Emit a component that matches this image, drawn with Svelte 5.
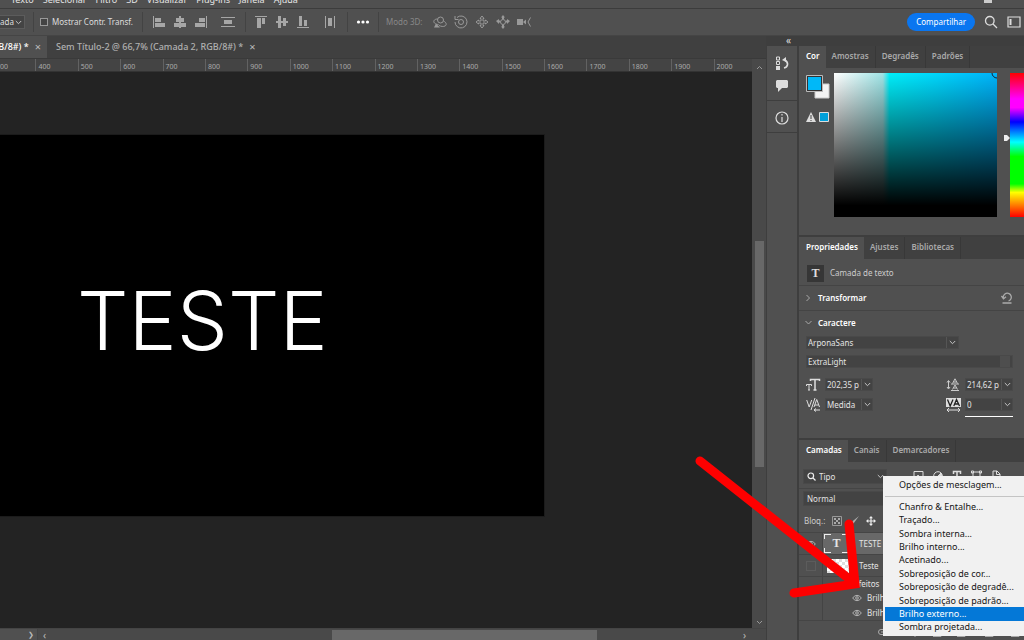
<script>
  const menus = ['Texto', 'Selecionar', 'Filtro', '3D', 'Visualizar', 'Plug-ins', 'Janela', 'Ajuda'];
  const marks = Array.from({ length: 18 }, (_, i) => (i + 3) * 100);
  const effects = [
    'Chanfro & Entalhe...', 'Traçado...', 'Sombra interna...', 'Brilho interno...', 'Acetinado...',
    'Sobreposição de cor...', 'Sobreposição de degradê...', 'Sobreposição de padrão...',
    'Brilho externo...', 'Sombra projetada...'
  ];
  const active = 'Brilho externo...';
  const alignH = [
    ['Alinhar à esquerda', 'M1 1h1v12H1zM3 3h6v4H3zM3 8h10v4H3z'],
    ['Centralizar na horizontal', 'M6 1h2v12H6zM3 3h8v4H3zM1 8h12v4H1z'],
    ['Alinhar à direita', 'M12 1h1v12h-1zM5 3h6v4H5zM1 8h10v4H1z']
  ];
  const alignV = [
    ['Alinhar ao topo', 'M1 1h12v1H1zM3 3h4v10H3zM8 3h3v6H8z'],
    ['Centralizar na vertical', 'M1 6h12v2H1zM3 1h3v12H3zM8 3h3v8H8z'],
    ['Alinhar à base', 'M1 12h12v1H1zM3 1h3v10H3zM8 5h3v6H8z']
  ];
</script>

{#snippet chevron()}
  <svg class="chev" width="7" height="5" viewBox="0 0 7 5"><path d="M.8 1l2.7 2.7L6.200 1" fill="none" stroke="#c4c4c4" /></svg>
{/snippet}

{#snippet eye()}
  <svg width="10" height="8" viewBox="0 0 10 8" fill="none" stroke="#b4b4b4"><path d="M.6 4Q5-1.400 9.400 4Q5 9.400.6 4z" /><circle cx="5" cy="4" r="1.300" /></svg>
{/snippet}

<div class="app">
  <nav class="menubar">
    {#each menus as m}<a href="#menu">{m}</a>{/each}
    <span class="winbtn"></span>
  </nav>

  <header class="options">
    <label class="mini"><select aria-label="Seleção"><option>ada</option></select>{@render chevron()}</label>
    <i class="sep"></i>
    <label class="check"><input type="checkbox" />Mostrar Contr. Transf.</label>
    <i class="sep wide"></i>
    <div class="tools">
      {#each alignH as [name, d]}<button aria-label={name}><svg width="14" height="14" viewBox="0 0 14 14"><path {d} /></svg></button>{/each}
      <button class="far" aria-label="Distribuir na vertical"><svg width="14" height="14" viewBox="0 0 14 14"><path d="M0 2h14v1H0zM3 5h8v4H3zM0 11h14v1H0z" /></svg></button>
    </div>
    <i class="sep"></i>
    <div class="tools">
      {#each alignV as [name, d]}<button aria-label={name}><svg width="14" height="14" viewBox="0 0 14 14"><path {d} /></svg></button>{/each}
      <button class="far" aria-label="Distribuir na horizontal"><svg width="14" height="14" viewBox="0 0 14 14"><path d="M2 1h1v12H2zM5 3h4v8H5zM11 1h1v12h-1z" /></svg></button>
    </div>
    <i class="sep"></i>
    <button class="dots" aria-label="Mais opções"><svg width="14" height="4" viewBox="0 0 14 4" fill="#fff"><circle cx="2.500" cy="2" r="1.600" /><circle cx="7" cy="2" r="1.600" /><circle cx="11.500" cy="2" r="1.600" /></svg></button>
    <i class="sep"></i>
    <span class="mode">Modo 3D:</span>
    <div class="tools line">
      <button aria-label="Orbitar"><svg width="14" height="14" viewBox="0 0 14 14"><circle cx="7.500" cy="5" r="3" /><path d="M4.500 4C1 4 0 6.500 1.500 8c1 1 2.500 1.500 4 1.500M10.500 6c3 1.500 3.500 4 1.500 5-1.500.8-4 .5-6-.5" /><path class="f" d="M1 12.500h6L3 8.500z" /></svg></button>
      <button aria-label="Girar"><svg width="14" height="14" viewBox="0 0 14 14"><circle cx="7" cy="7" r="2.500" /><path d="M3 2.500A6 6 0 1 1 1 7M1 1v3.500h3.500" /></svg></button>
      <button aria-label="Deslocar"><svg width="14" height="14" viewBox="0 0 14 14"><path d="M7 1l2 2.500H8v2.500h2.500V5L13 7l-2.500 2V8H8v2.500h1L7 13l-2-2.500h1V8H3.500v1L1 7l2.500-2v1H6V3.500H5z" /></svg></button>
      <button aria-label="Deslizar"><svg width="14" height="14" viewBox="0 0 14 14"><circle cx="7" cy="7" r="2.500" /><path class="f" d="M7 0l2 2.500H8V4H6V2.500H5zM0 6l3-2v1.500h1v2H3V9zM14 6l-3-2v1.500h-1v2h1V9zM7 14l2-2.500H8V10H6v1.500H5z" /></svg></button>
      <button aria-label="Câmera"><svg width="14" height="14" viewBox="0 0 14 14"><path class="f" d="M0 4h6v6H0zM6 7l3-2.500v5z" /><path d="M13.500 2.500L11 7l2.500 4.500" /></svg></button>
    </div>
    <div class="right">
      <button class="share">Compartilhar</button>
      <button aria-label="Pesquisar"><svg width="14" height="14" viewBox="0 0 14 14" fill="none" stroke="#ddd" stroke-width="1.300"><circle cx="5.800" cy="5.800" r="4.300" /><path d="M9 9l4 4" /></svg></button>
      <button aria-label="Área de trabalho"><svg width="14" height="12" viewBox="0 0 14 12" fill="none" stroke="#ddd" stroke-width="1.200"><path d="M1 1h12v10H1z" /><path d="M3.500 3v6" stroke-width="2" /></svg></button>
    </div>
  </header>

  <main>
    <section class="editor">
      <div class="doctabs">
        <div class="doctab on">B/8#) *<button aria-label="Fechar">×</button></div>
        <div class="doctab">Sem Título-2 @ 66,7% (Camada 2, RGB/8#) *<button aria-label="Fechar">×</button></div>
      </div>
      <div class="work">
        <div class="view">
          <div class="rulerbox"><div class="ruler">{#each marks as m}<span>{m}</span>{/each}</div></div>
          <div class="stage"><div class="art">TESTE</div></div>
        </div>
        <div class="vscroll">
          <svg width="7" height="5" viewBox="0 0 7 5" fill="none" stroke="#999"><path d="M1 4l2.500-2.500L6 4" /></svg>
          <i></i>
          <svg width="7" height="5" viewBox="0 0 7 5" fill="none" stroke="#999"><path d="M1 1l2.500 2.500L6 1" /></svg>
        </div>
      </div>
      <div class="hscroll"><span class="status">❯</span><span class="prev">‹</span><i></i><span class="next">›</span></div>
    </section>

    <aside>
      <div class="collapse"><span>«</span></div>
      <div class="docks">
        <div class="strip">
          <button class="one" aria-label="Histórico"><svg width="14" height="14" viewBox="0 0 14 14" fill="none" stroke="#ddd"><path d="M1.500 1h3v3h-3zM1.500 5.500h3v3h-3z" /><path d="M1 10h4v4H1z" fill="#ddd" stroke="none" /><path d="M9 12c4-1 5-5 1-8" stroke-width="1.600" /><path d="M7 4l4-3v5z" fill="#ddd" stroke="none" /></svg></button>
          <button class="two" aria-label="Comentários"><svg width="14" height="12" viewBox="0 0 14 12" fill="#ddd"><path d="M2 0h10l1 1v6l-1 1H7l-4 4V8H2L1 7V1z" /></svg></button>
          <button class="three" aria-label="Informações"><svg width="14" height="14" viewBox="0 0 14 14" fill="none" stroke="#ddd" stroke-width="1.200"><circle cx="7" cy="7" r="6" /><path d="M7 6v5M7 3v1.500" /></svg></button>
        </div>

        <div class="panels">
          <section class="color">
            <div class="tabs"><button class="on">Cor</button><button>Amostras</button><button>Degradês</button><button>Padrões</button></div>
            <div class="picker">
              <div class="swatches">
                <svg width="24" height="24" viewBox="0 0 24 24"><path d="M9 9h14v14H9z" fill="#f4f4f4" stroke="#ccc" /><path d="M.5.5h16v16H.5z" fill="#333" stroke="#bbb" /><path d="M2 2h13v13H2z" fill="#00b8f8" /></svg>
                <svg width="24" height="12" viewBox="0 0 24 12"><path d="M5 1l5 10H0z" fill="#ddd" /><path d="M5 4v4M5 9v1" stroke="#444" /><path d="M13.500 1.500h9v9h-9z" fill="#00a0da" stroke="#ddd" /></svg>
              </div>
              <div class="field"><svg width="6" height="6" viewBox="0 0 6 6" fill="none" stroke="#123"><path d="M1 0a5 5 0 0 0 5 5" /></svg></div>
              <svg class="pin" width="6" height="8" viewBox="0 0 6 8"><path d="M0 1h3l3 3-3 3H0z" fill="#eee" /></svg>
              <div class="hue"></div>
            </div>
          </section>

          <section class="props">
            <div class="tabs"><button class="on">Propriedades</button><button>Ajustes</button><button>Bibliotecas</button></div>
            <div class="kind"><b>T</b>Camada de texto</div>
            <div class="fold">
              <svg width="6" height="8" viewBox="0 0 6 8" fill="none" stroke="#aaa"><path d="M1 1l3 3-3 3" /></svg>Transformar
              <button aria-label="Redefinir"><svg width="12" height="12" viewBox="0 0 12 12" fill="none" stroke="#aaa" stroke-width="1.300"><path d="M2.500 6.500A4 4 0 1 1 7.500 9M.5 4l2 2.800 2.500-2M1.500 11h9" /></svg></button>
            </div>
            <div class="fold">
              <svg width="8" height="6" viewBox="0 0 8 6" fill="none" stroke="#aaa"><path d="M1 1l3 3 3-3" /></svg>Caractere
            </div>
            <div class="chars">
              <label class="sel font"><select aria-label="Fonte"><option>ArponaSans</option></select>{@render chevron()}</label>
              <label class="sel style"><select aria-label="Estilo"><option>ExtraLight</option></select><span class="dim"></span></label>
              <div class="pairs">
                <div class="pair">
                  <svg width="15" height="13" viewBox="0 0 15 13" fill="none" stroke="#ddd"><path d="M4.500 3V1.500h9V3M9 2v9.500M7.500 12h3" stroke-width="1.500" /><path d="M.5 8V6.500h5V8M3 7v5M2 12h2" /></svg>
                  <label class="sel num"><input aria-label="Tamanho" value="202,35 p" />{@render chevron()}</label>
                  <svg class="mid" width="15" height="13" viewBox="0 0 15 13" fill="none" stroke="#ccc"><path d="M2.500 3v7M1 4.500L2.500 2.500 4 4.500M1 9l1.500 2L4 9" /><path d="M6.500 5.500L9 .8l2.500 4.700M7.500 4h3M6.500 11.500L9 7l2.500 4.500M7.500 10h3M5 6h8M5 12.500h8" /></svg>
                  <label class="sel num"><input aria-label="Entrelinha" value="214,62 p" />{@render chevron()}</label>
                </div>
                <div class="pair">
                  <svg width="15" height="14" viewBox="0 0 15 14" fill="none" stroke="#ddd"><path d="M.7 2l2.500 7 2.500-7M9 0L5 12M8 9l2.700-7.500L13.500 9M9 7h3.500M8 12h6M10 10.500L8 12l2 1.500" /></svg>
                  <label class="sel num"><select aria-label="Kerning"><option>Medida</option></select>{@render chevron()}</label>
                  <svg class="mid" width="15" height="14" viewBox="0 0 15 14" fill="none" stroke="#ddd"><path d="M0 0h15v9H0z" fill="#ddd" stroke="none" /><path d="M1.500 1.500l2.700 6.500L7 1.500M7.800 8l2.700-6.500L13.500 8M9 6h3.500" stroke="#222" stroke-width="1.300" /><path d="M1 12h13M3 10L1 12l2 2M12 10l2 2-2 2" /></svg>
                  <label class="sel num"><input aria-label="Espaçamento" value="0" />{@render chevron()}</label>
                </div>
              </div>
              <i class="rule"></i>
            </div>
          </section>

          <section class="layers">
            <div class="tabs"><button class="on">Camadas</button><button>Canais</button><button>Demarcadores</button></div>
            <div class="filter">
              <label class="sel kindsel">
                <svg width="9" height="9" viewBox="0 0 9 9" fill="none" stroke="#eee" stroke-width="1.200"><circle cx="3.800" cy="3.800" r="2.800" /><path d="M6 6l2.500 2.500" /></svg>
                <select aria-label="Filtrar"><option>Tipo</option></select>{@render chevron()}
              </label>
              <svg class="kinds" width="90" height="12" viewBox="0 0 90 12" fill="none" stroke="#ddd"><path d="M1 1.500h9v9H1zM2.500 9l2.500-4 3 4" /><circle cx="25" cy="6" r="4.300" /><path d="M28 3l-6 6a4.300 4.300 0 0 0 6-6z" fill="#ddd" /><path d="M40.500 4V1.500h7V4M44 2v9" stroke-width="1.500" /><path d="M60 2h7v8h-7zM58.500 1h2v2h-2zM66.500 1h2v2h-2z" /><path d="M80 1h4l3 3v7h-7zM83.500 1v3.500H87" /></svg>
            </div>
            <div class="blend"><label class="sel"><select aria-label="Modo de mesclagem"><option>Normal</option></select></label></div>
            <div class="lock">Bloq.:
              <button aria-label="Bloquear transparência"><svg width="10" height="10" viewBox="0 0 10 10"><path d="M.5.5h9v9h-9z" fill="none" stroke="#999" /><path d="M2 2h2v2H2zM6 2h2v2H6zM4 4h2v2H4zM2 6h2v2H2zM6 6h2v2H6z" fill="#aaa" /></svg></button>
              <button aria-label="Bloquear pintura"><svg width="10" height="10" viewBox="0 0 10 10"><path d="M10 0L4.500 7.500 2.500 6zM2.500 6.500L4 8 1 10z" fill="#aaa" /></svg></button>
              <button aria-label="Bloquear posição"><svg width="10" height="10" viewBox="0 0 10 10" fill="#eee"><path d="M5 0l2 2.300H5.600v2.100h2.100V3L10 5 7.700 7V5.600H5.600v2.100H7L5 10 3 7.700h1.400V5.600H2.300V7L0 5l2.300-2v1.400h2.100V2.300H3z" /></svg></button>
            </div>
            <div class="list">
              <div class="row sel1"><span class="eyes">{@render eye()}</span><span class="body"><span class="frame"><b>T</b></span>TESTE</span></div>
              <div class="row"><span class="eyes"><i></i></span><span class="body"><span class="thumb"></span>Teste</span></div>
              <div class="row fx head"><span class="eyes"></span><span class="body">Efeitos</span></div>
              <div class="row fx"><span class="eyes"></span><span class="body">{@render eye()}Brilho</span></div>
              <div class="row fx"><span class="eyes"></span><span class="body">{@render eye()}Brilho</span></div>
            </div>
            <div class="foot">
              <svg width="150" height="10" viewBox="0 0 150 10" fill="none" stroke="#aaa"><path d="M7 2.500H4a2.500 2.500 0 0 0 0 5h3M4 5h5" /><path d="M38 8v2M56 7.500h8v2h-8M80 7.500h8v2h-8M108 7.500h8v2h-8M134 7.500h8v2h-8" /></svg>
            </div>

            <svg class="arrow" width="170" height="150" viewBox="0 0 170 150" fill="none" stroke="#fe0000" stroke-width="9" stroke-linecap="round"><path d="M7 7L160 128M156 70L162 130L101 139" /></svg>

            <div class="popup" role="menu">
              <button role="menuitem">Opções de mesclagem...</button>
              <hr />
              <div class="items">
                {#each effects as e}<button role="menuitem" class:hot={e === active}>{e}</button>{/each}
              </div>
            </div>
          </section>
        </div>
      </div>
    </aside>
  </main>
</div>

<style>
  :global(body) { margin: 0; overflow: hidden; background: #505050; }
  .app { height: 100vh; display: flex; flex-direction: column; overflow: hidden; background: #505050; color: #ddd; font: 8px/12px "Noto Sans", sans-serif; }
  .app * { box-sizing: border-box; }
  button, select, input { font: inherit; color: inherit; background: none; border: 0; padding: 0; margin: 0; outline: 0; border-radius: 0; }
  button { display: flex; align-items: center; }
  select { appearance: none; }
  svg { display: block; flex: none; }
  i { display: block; }

  .menubar { height: 9px; flex: none; display: flex; align-items: flex-end; gap: 9px; padding: 0 32px 2px 11px; overflow: hidden; border-bottom: 1px solid #3c3c3c; font-size: 9px; }
  .menubar a { color: #e6e6e6; text-decoration: none; }
  .winbtn { width: 8px; height: 3px; margin-left: auto; background: #ccc; align-self: flex-start; }

  .options { height: 27px; flex: none; display: flex; align-items: center; border-bottom: 1px solid #454545; overflow: hidden; }
  .mini { display: flex; align-items: center; justify-content: space-between; width: 25px; height: 14px; padding-right: 2px; background: #444; border: 1px solid #5c5c5c; border-left: 0; }
  .mini select { width: 14px; overflow: hidden; }
  .sep { width: 1px; height: 20px; background: #434343; margin: 0 6px 0 8px; }
  .options .wide { margin: 0 9px; }
  .check { display: flex; align-items: center; gap: 4px; white-space: nowrap; }
  .check input { appearance: none; width: 8px; height: 8px; border: 1px solid #999; background: #444; }
  .tools { display: flex; gap: 7px; fill: #a6a6a6; padding: 0 2px 0 0; }
  .tools + .sep { margin-right: 8px; }
  .far { margin-left: 6px; }
  .line { fill: none; stroke: #999; }
  .line .f { fill: #999; stroke: none; }
  .mode { color: #888; width: 48px; padding-left: 1px; }
  .right { display: flex; align-items: center; gap: 9px; margin-left: auto; padding-right: 3px; }
  .share { height: 18px; padding: 0 9px; border-radius: 9px; background: #0a76f0; color: #fff; }

  main { flex: 1; min-height: 0; display: flex; }
  .editor { flex: 1; min-width: 0; display: flex; flex-direction: column; background: #494949; }
  .doctabs { height: 23px; flex: none; display: flex; background: #404040; font-size: 9px; font-weight: 500; color: #b0b0b0; white-space: nowrap; border-bottom: 1px solid #3a3a3a; }
  .doctab { display: flex; align-items: center; gap: 6px; padding: 0 9px; }
  .doctab.on { background: #505050; color: #fff; padding: 0 6px 0 0; width: 47px; justify-content: flex-end; }
  .doctab button { font-size: 11px; font-weight: 400; color: #bbb; }
  .work { flex: 1; min-height: 0; display: flex; }
  .view { flex: 1; min-width: 0; display: flex; flex-direction: column; }
  .rulerbox { height: 13px; flex: none; overflow: hidden; background: #444; border-bottom: 1px solid #333; }
  .ruler { display: grid; grid-template-columns: repeat(18, 1fr); margin: 0 -4px 0 -7px; height: 13px; font-size: 7px; line-height: 15px; color: #aaa; }
  .ruler span { border-left: 1px solid #626262; padding-left: 2px; background: repeating-linear-gradient(90deg, #606060 0 1px, transparent 1px 4px) bottom / 100% 2px no-repeat; }
  .stage { flex: 1; background: #232323; padding: 63px 208px 112px 0; display: flex; }
  .art { flex: 1; background: #000; outline: 1px solid #1b1b1b; color: #fff; font: 300 81px/95px Inter, sans-serif; padding: 139px 0 0 77px; }
  .vscroll { width: 14px; flex: none; display: flex; flex-direction: column; align-items: center; padding: 6px 0 3px; }
  .vscroll i { width: 9px; height: 226px; margin: 171px 0 auto; background: #686868; }
  .hscroll { height: 12px; flex: none; display: flex; align-items: center; font-size: 10px; color: #bbb; border-top: 1px solid #444; overflow: hidden; }
  .hscroll .status { width: 38px; height: 12px; text-align: right; padding-right: 3px; background: #505050; border-right: 1px solid #444; font-size: 7px; }
  .hscroll .prev { width: 294px; padding-left: 5px; }
  .hscroll i { width: 265px; height: 10px; align-self: flex-end; background: #686868; }
  .hscroll .next { margin-left: auto; padding-right: 20px; }

  aside { width: 258px; flex: none; display: flex; flex-direction: column; background: #3e3e3e; }
  .collapse { height: 10px; flex: none; padding-left: 20px; line-height: 8px; font-size: 10px; }
  .docks { flex: 1; min-height: 0; display: flex; gap: 2px; padding-left: 1px; }
  .strip { width: 30px; flex: none; background: #505050; }
  .strip button { width: 100%; justify-content: center; }
  .one { height: 34px; }
  .two { height: 20px; align-items: flex-start; }
  .strip .three { height: 33px; padding-top: 2px; border: solid #3e3e3e; border-width: 1px 0; }
  .panels { flex: 1; min-width: 0; display: flex; flex-direction: column; gap: 2px; }
  .panels section { background: #505050; }
  .tabs { height: 22px; display: flex; background: #404040; color: #aaa; font-weight: 600; }
  .tabs button { padding: 0 6px 2px; border-right: 1px solid #383838; }
  .tabs .on { background: #505050; color: #fff; padding-left: 7px; border: 0; }

  .color { height: 189px; flex: none; }
  .picker { display: flex; padding: 5px 0 0 7px; }
  .swatches { width: 28px; padding-top: 2px; display: grid; gap: 12px; align-content: start; }
  .field { flex: 1; height: 144px; background: linear-gradient(transparent, #000 92%), linear-gradient(90deg, #fff 0, #9fe4e6 30%, #00eefa 34%, #00d8fc 60%, #00b2fa); }
  .field svg { margin-left: auto; }
  .pin { margin: 61px 0 0 7px; }
  .hue { width: 14px; height: 144px; background: linear-gradient(#f00, #f0f 18%, #f0f 24%, #00f 34%, #0ff 48%, #0f0 58%, #0f0 77%, #ff0 83%, #f00); }

  .props { height: 201px; flex: none; }
  .kind { height: 26px; display: flex; align-items: center; gap: 6px; padding: 2px 8px 0; color: #ccc; }
  .kind b { width: 17px; height: 17px; background: #363636; text-align: center; font: 700 12px/17px "Liberation Serif", serif; color: #ddd; }
  .fold { height: 25px; display: flex; align-items: center; gap: 5px; padding: 0 11px 0 5px; border-top: 1px solid #444; font-weight: 600; color: #fff; }
  .fold svg { width: 9px; }
  .fold button { margin-left: auto; }
  .fold button svg { width: 12px; }
  .chars { display: grid; gap: 6px; padding: 1px 11px 0 7px; }
  .pairs { display: grid; gap: 7px; padding-top: 4px; }
  .sel { display: flex; align-items: center; height: 13px; background: #434343; border: 1px solid #494949; padding: 0 2px 0 1px; color: #e4e4e4; }
  .sel select, .sel input { flex: 1; width: 0; min-width: 0; height: 11px; }
  .sel .chev { box-sizing: content-box; padding: 3px 0 3px 2px; border-left: 1px solid #555; }
  .font { width: 153px; }
  .dim { width: 10px; height: 11px; background: #4e4e4e; }
  .pair { display: flex; align-items: center; height: 13px; }
  .num { width: 48px; margin-left: 4px; padding-right: 1px; }
  .num + .mid { margin-left: auto; }
  .rule { width: 48px; height: 1px; margin-left: auto; margin-top: -1px; background: #fff; }

  .layers { flex: 1; position: relative; }
  .filter { height: 27px; display: flex; align-items: center; gap: 26px; padding: 2px 0 0 4px; border-bottom: 1px solid #454545; }
  .filter .sel, .blend .sel { width: 84px; height: 15px; padding-left: 3px; }
  .kindsel { gap: 3px; }
  .kindsel .chev { border: 0; }
  .blend { padding: 2px 0 3px 4px; }
  .lock { height: 23px; display: flex; align-items: center; gap: 7px; padding-left: 5px; color: #ccc; }
  .list { border-top: 1px solid #454545; }
  .row { height: 22px; display: flex; border-bottom: 1px solid #454545; color: #e4e4e4; }
  .eyes { width: 24px; flex: none; display: flex; align-items: center; justify-content: center; border-right: 1px solid #444; }
  .eyes i { width: 10px; height: 10px; border: 1px solid #5c5c5c; }
  .body { flex: 1; display: flex; align-items: center; gap: 10px; padding-left: 1px; }
  .sel1 .body { background: #686868; }
  .frame {
    --h: linear-gradient(90deg, #eee 7px, transparent 7px calc(100% - 7px), #eee calc(100% - 7px));
    --v: linear-gradient(#eee 5px, transparent 5px calc(100% - 5px), #eee calc(100% - 5px));
    width: 25px; height: 19px; text-align: center; font: 700 12px/18px "Liberation Serif", serif;
    background: var(--h) top / 100% 1px no-repeat, var(--h) bottom / 100% 1px no-repeat, var(--v) left / 1px 100% no-repeat, var(--v) right / 1px 100% no-repeat;
  }
  .thumb { width: 22px; height: 14px; margin-left: 3px; background: repeating-conic-gradient(#fff 0 25%, #ddd 0 50%) 0 0 / 6px 6px; }
  .fx { height: 15px; border: 0; }
  .fx .body { padding-left: 29px; gap: 5px; }
  .head { height: 13px; }
  .head .body { padding-left: 31px; }
  .foot { border-top: 1px solid #454545; padding: 6px 0 0 78px; }
  .arrow { position: absolute; left: -106px; top: 14px; z-index: 2; }
  .popup { position: absolute; left: 84px; right: 0; top: 36px; height: 160px; z-index: 1; display: flex; flex-direction: column; background: #f1f1f1; color: #151515; font-size: 9px; padding: 2px 0 2px 2px; white-space: nowrap; }
  .popup button { padding-left: 14px; height: 14px; width: 100%; }
  .popup hr { width: 100%; margin: 4px 0 3px; border: 0; border-top: 1px solid #c4c4c4; }
  .items { flex: 1; display: flex; flex-direction: column; }
  .items button { flex: 1; min-height: 0; height: auto; }
  .popup .hot { background: #0478d7; color: #fff; }
</style>
